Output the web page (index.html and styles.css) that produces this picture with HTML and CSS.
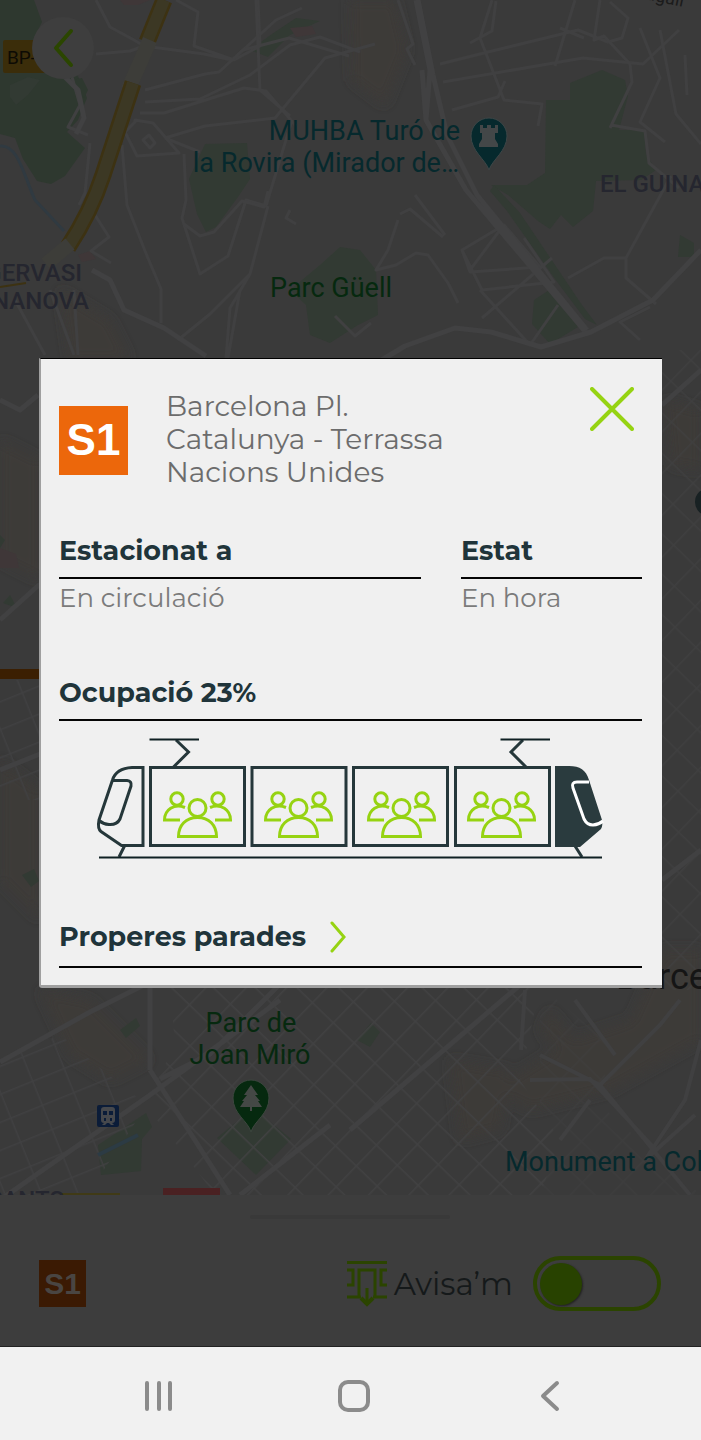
FILE: index.html
```html
<!DOCTYPE html>
<html lang="ca">
<head>
<meta charset="utf-8">
<meta name="viewport" content="width=device-width, initial-scale=1">
<title>Barcelona Pl. Catalunya - Terrassa Nacions Unides</title>
<link rel="stylesheet" href="styles.css">
</head>
<body>
<div class="screen">
  <div class="app">
    <div class="map">
      <svg class="map-canvas" viewBox="0 0 701 1195" preserveAspectRatio="xMinYMin slice" role="img" aria-label="Mapa de Barcelona">
        <defs>
          <pattern id="blocks" width="29" height="29" patternUnits="userSpaceOnUse" patternTransform="translate(375 1062) rotate(44)">
            <path d="M0 0H29M0 0V29" stroke="#414142" stroke-width="3" fill="none"/>
          </pattern>
          <pattern id="blocks-small" width="26" height="34" patternUnits="userSpaceOnUse" patternTransform="rotate(68)">
            <path d="M0 0H26M0 0V34" stroke="#404041" stroke-width="3" fill="none"/>
          </pattern>
          <filter id="soft"><feGaussianBlur stdDeviation="6"/></filter>
        </defs>
        <rect width="701" height="1195" fill="#3a3a3a"/>

        <g fill="#3d3b37" filter="url(#soft)">
          <path d="M350 0h45l12 50-22 55-33-25z"/>
          <path d="M0 440l40 20v120L0 560zM0 760l40 30v130L0 880z"/>
          <path d="M665 400l36 10v60l-30-5zM662 950h39v90l-90 50-80 20-40-20 80-50 60-20z"/>
          <path d="M40 990l50 10 60 60-40 20-40-25zM450 1060l60 10-10 60-40 10zM550 1010l25 30-15 15-20-25z"/>
          <path d="M60 290l50 30 20 40H70z"/>
        </g>

        <g fill="#2e382f">
          <path d="M0 0h34l8 22-10 20 46 34 9 22-9 22-11 12 18 16-20 28-14 8-14-3-14-22L15 138 0 134z"/>
          <path d="M72 80l10-2 6 12-4 8z"/>
        </g>
        <g fill="#323a33">
          <path d="M10 85l18-8 12 3-12 15-12 10-6-8z"/>
          <path d="M205 144l42-1 3 36-12 18-22 30-10 5-9-18-8-35z"/>
          <path d="M250 50l22-16 24-16 24 3-30 14-22 22z"/>
          <path d="M290 290l30-25 20-18 20 3 16 20 2 45-20 10-28 18-20-8-4-30z"/>
          <path d="M602 70l23 10 3 16-9 34h25l2 24 10 16-15 10-45 1-3 30-20 16-12-12-11 14-12-8-30-26-17-10h36l18-12 1-73h24V83z"/>
          <path d="M494 185l26 28 62 92 15 20-12-6-30-40-48-68-17-20zM534 300l20-13 24 40-28 17-18-20z"/>
          <path d="M680 235l14 8v14h-16z"/>
          <path d="M357 1040l14-17 9 9-10 15z"/>
          <path d="M217 1138l36-30 38 31-35 36z"/>
          <path d="M98 1145l30-20 18-12 6 14-10 12-1 32-40 4z"/>
          <path d="M120 1030l16-12 4 8-14 12zM22 875l12-6 5 12-8 6zM0 535l5 5-5 8zM3 603l7-8 7 13z"/>
        </g>
        <g fill="#3f3738">
          <path d="M120 0h30l-12 5h-14zM290 28l22-2 4 8-20 3zM78 255l12-4 6 8-14 3zM0 548l16 6 3 14H0z"/>
        </g>

        <path fill="url(#blocks)" d="M170 985H540l-20 95 40 60-20 55H215l-30-40-40-50 30-60z"/>
        <path fill="url(#blocks)" d="M540 985l70 60-10 60 101 90H540z" opacity=".4"/>
        <path fill="url(#blocks)" d="M662 350h39v640h-39z" opacity=".7"/>
        <path fill="url(#blocks-small)" d="M0 1060l60-25 55 45 32 25-60 90H0z"/>
        <path fill="url(#blocks-small)" d="M0 680h40v120H0z"/>

        <g fill="none" stroke="#404041" stroke-width="3" stroke-linejoin="round">
          <path d="M96 0l14 27 24 13 10 6-14 5-34 3M144 46l60 8 28 6 44-40 26-12M176 0l22 12-4 34 40 14 26-14-2-46"/>
          <path d="M145 90l60-16 14-2 24-22 46-12 60 18M145 102l55-3 50-24 40-30 30-8 40 15M140 113h24l80-25 22 3 30 35M165 138l40-12 70-8 50-60 50-14M165 138l35 14M256 0l4 90 30 26"/>
          <path d="M135 120l18 3 26 30-42 3-12-24 10-10zM143 140l6-5 6 8-5 5z"/>
          <path d="M122 145l5 60 18 46 16 38v34M88 135l-20-8 12-22-8-28M90 143l-5 50-6 12M184 154l2 46-4 18 18 56 28-18 18-56 20 6 26-86"/>
          <path d="M184 224l16 12 14-4 28-31 22 6 4-16M268 206l-18 68-40 40-32 26M250 274l-20 34-4 50M240 290l-12 68M290 210l-4 8 10 6M335 316l20 20 16-13"/>
          <path d="M95 215l14 22-18 14 20 12M50 290l24 65M74 290l4 65M15 300l30 55"/>
          <path d="M398 0l15 44-6 5 8 16M440 64l48-12 90-22 30 12 14-4 6-20-18-16M443 82l140-24 60 6 36-34M470 43l22-12 4-30M492 0l-12 38 24 62 38 4-4 22M452 110l46-13 7-16M575 0l-20 66M560 28l24 10"/>
          <path d="M600 0l-6 40 10-4 26 28 2 18-22 46M640 28l20 50-20 44 25 20M660 30l16 84 25 30M685 55l2 40M611 125l34 6 4 32 30 25"/>
          <path d="M415 195l30 40M398 220l-10 30-12 20 20-5 20-12 12 2 20 28 10 20M400 214l10-5 33 28"/>
          <path d="M462 250l42-25 36 42-70 5zM462 250l20 40 72-8-30-44M480 290l50 55 28-40M482 318l70-60M500 230l-30 40"/>
          <path d="M568 278l36-20h22l45-82M626 258v20l30 26M640 340l-20-18 30-15"/>
        </g>
        <g fill="none" stroke="#414142" stroke-width="5" stroke-linejoin="round">
          <path d="M416 0l14 70M430 70l-4 50M418 0l15 75 14 60 30 60 110 135M422 70l4 50 40 70 80 95 42 50"/>
          <path d="M701 250l-48 50-62 32-50 15-50-15-36-4-50 18-50 30"/>
          <path d="M92 270l18 10 14 30 40 18 42 28M60 72l18 18 6 28-8 16M0 400l20 10 18-15M0 620l40-36"/>
          <path d="M0 1062l90-50 90-45M0 1200l150-105 130-95M150 985v85M150 1070l80 125M160 1079l50-25 30-30 40-40M350 1130l170-145M240 1195l90-70"/>
          <path d="M662 880l39-30M662 405l39-35M0 770l40-16"/>
        </g>
        <g fill="none" stroke="#404041" stroke-width="4">
          <path d="M525 990l-4 60M540 1055l60 30 60-60 20-25M530 1080l60-1 65 70M590 1100l-30 40M575 1000l40 55M701 1040l-16 60-40 60 50-45M600 1085l90 110"/>
        </g>

        <path d="M164 0l-17 42" fill="none" stroke="#3d3212" stroke-width="17"/>
        <path d="M164 0l-17 42" fill="none" stroke="#3c3824" stroke-width="12"/>
        <path d="M150 40L128 90" fill="none" stroke="#3d3d39" stroke-width="15"/>
        <path d="M133 83L103 175Q91 212 68 247" fill="none" stroke="#3d3212" stroke-width="17"/>
        <path d="M133 83L103 175Q91 212 68 247" fill="none" stroke="#3c3824" stroke-width="12"/>
        <path d="M70 244l-24 20" fill="none" stroke="#3d3d39" stroke-width="14"/>
        <path d="M0 287l26-4" stroke="#3d3212" stroke-width="2"/>
        <path d="M0 146c18-2 24 30 35 54l29 31" fill="none" stroke="#303a41" stroke-width="3"/>
        <path d="M98 1155l40-20" fill="none" stroke="#2c3b44" stroke-width="4"/>
        <path d="M0 674h42" stroke="#3b1f02" stroke-width="10"/>
        <circle cx="709" cy="502" r="14" fill="#182123"/>
        <rect x="163" y="1188" width="57" height="8" fill="#4a2122"/>
        <path d="M60 1194h60" stroke="#403a16" stroke-width="2"/>

        <rect x="3" y="40" width="52" height="33" rx="2" fill="#3b2d0a"/>
        <text class="road-name" x="7" y="64">BP-</text>
        <text class="street-name" x="645" y="-1" transform="rotate(12 645 -1)">ugall</text>

        <g class="place teal">
          <text x="460" y="140" text-anchor="end">MUHBA Turó de</text>
          <text x="459" y="172" text-anchor="end">la Rovira (Mirador de…</text>
          <text x="505" y="1171">Monument a Col</text>
        </g>
        <g class="place green">
          <text x="270" y="297">Parc Güell</text>
          <text x="251" y="1032" text-anchor="middle">Parc de</text>
          <text x="250" y="1064" text-anchor="middle">Joan Miró</text>
        </g>
        <g class="district">
          <text x="82" y="281" text-anchor="end">GERVASI</text>
          <text x="89" y="309" text-anchor="end">NANOVA</text>
          <text x="600" y="192">EL GUINA</text>
          <text x="64" y="1208" text-anchor="end">SANTS</text>
        </g>
        <text class="city" x="616" y="989">Barce</text>

        <path d="M489 170c-3-10-18-19-18-34a18 18 0 0 1 36 0c0 15-15 24-18 34z" fill="#06292d" stroke="#3d4647"/>
        <path d="M480 125h3v3h4v-3h4v3h4v-3h3v8h-3v6l3 5v3h-19v-3l3-5v-6h-2z" fill="#434748"/>
        <path d="M251 1132c-3-11-18-18-18-34a18 18 0 0 1 36 0c0 16-15 23-18 34z" fill="#06290f" stroke="#3d463f"/>
        <path d="M251 1085l7 10h-3l5 6h-2l4 6h-10v4h-2v-4h-10l4-6h-2l5-6h-3z" fill="#444845"/>
        <rect x="97" y="1105" width="22" height="22" rx="2" fill="#0b1c38"/>
        <path fill-rule="evenodd" fill="#46484c" d="M104 1107h8q3 0 3 3v10q0 3-3 3l2 2h-3l-2-2h-2l-2 2h-3l2-2q-3 0-3-3v-10q0-3 3-3zm-1 4v4h4v-4zm6 0v4h4v-4zm-5 7v3h2v-3zm6 0v3h2v-3z"/>
      </svg>
      <button class="back" type="button" aria-label="Enrere">
        <svg width="62" height="62" viewBox="0 0 62 62"><path d="M39 14L24 31l15 17" fill="none" stroke="#2b4600" stroke-width="4" stroke-linecap="round" stroke-linejoin="round"/></svg>
      </button>
    </div>

    <section class="sheet">
      <div class="handle"></div>
      <div class="sheet-row">
        <span class="badge badge-dim">S1</span>
        <label class="notify" for="notify">
          <svg width="40" height="46" viewBox="0 0 40 46" fill="none" stroke="#2b4400" stroke-width="3" aria-hidden="true">
            <path d="M0 1.500H40M0 9H6V24H0M40 9H34V24H40M12 36V9H28V36M0 36H14M26 36H40M20 27V43"/>
            <path d="M14 37L20 43L26 37" stroke-width="4"/>
          </svg>
          <span>Avisa’m</span>
        </label>
        <input class="toggle" id="notify" type="checkbox" role="switch">
      </div>
    </section>

    <div class="overlay">
      <section class="dialog" role="dialog" aria-modal="true" aria-labelledby="route">
        <header class="dialog-head">
          <span class="badge">S1</span>
          <h1 id="route">Barcelona Pl. Catalunya - Terrassa Nacions Unides</h1>
          <button class="close" type="button" aria-label="Tanca">
            <svg width="44" height="44" viewBox="0 0 44 44"><path d="M2 2L42 42M42 2L2 42" stroke="#96d312" stroke-width="4" stroke-linecap="round"/></svg>
          </button>
        </header>

        <div class="facts">
          <div>
            <h2>Estacionat a</h2>
            <p>En circulació</p>
          </div>
          <div>
            <h2>Estat</h2>
            <p>En hora</p>
          </div>
        </div>

        <h2>Ocupació 23%</h2>
        <svg class="train" viewBox="59 735 583 126" role="img" aria-label="Ocupació per cotxe">
          <defs>
            <g id="people" fill="none" stroke="#96d312" stroke-width="3">
              <circle cx="14" cy="9" r="6.200"/>
              <circle cx="55" cy="9" r="6.200"/>
              <circle cx="34.500" cy="18" r="8.500"/>
              <path d="M22 17.500C11 13 1.500 20 1.500 30H17"/>
              <path d="M47 17.500C58 13 67.500 20 67.500 30H52"/>
              <path d="M15.500 46.500C15.500 35 23 27.500 34.500 27.500S53.500 35 53.500 46.500Z"/>
            </g>
          </defs>
          <g fill="none" stroke="#25373a" stroke-width="3">
            <path d="M143 767.500H132C121 768 115 772 112.500 780L99 820C98 825 98 829 101 831.500L121.500 845.500H143Z"/>
            <path d="M112.500 780.500H127Q132 781 131 786L120 819Q117 825 109 824.500Q103 824 99 820.500"/>
            <path d="M124.500 846L119 857M176 740L188.500 752L173.500 767M523 740L511 752L526 767M575 846L582 857"/>
            <path d="M150.500 767.500h94v78h-94zM252 767.500h94v78h-94zM353.500 767.500h94v78h-94zM455.500 767.500h94v78h-94z"/>
          </g>
          <path d="M149.500 739.500H199M500.500 739.500H550M99 857.500H602" stroke="#0f2023" stroke-width="2"/>
          <path d="M555 766H569C580 766 586 770 589 780L602 820Q603 826 601 829L580 847H555Z" fill="#2a3b3e"/>
          <path d="M589 782H577Q571 782 573 788L584 819Q587 825 593 825Q599 824.500 603 821" fill="none" stroke="#fff" stroke-width="3"/>
          <use href="#people" x="163" y="790"/>
          <use href="#people" x="264" y="790"/>
          <use href="#people" x="367" y="790"/>
          <use href="#people" x="467" y="790"/>
        </svg>

        <h2 class="stops-title"><button class="stops" type="button">
          <span>Properes parades</span>
          <svg width="16" height="32" viewBox="0 0 16 32"><path d="M2 2L14 16L2 30" fill="none" stroke="#96d312" stroke-width="3" stroke-linecap="round"/></svg>
        </button></h2>
      </section>
    </div>
  </div>

  <nav class="system-bar" aria-label="Sistema">
    <button type="button" aria-label="Recents">
      <svg width="32" height="32" viewBox="0 0 32 32"><path d="M4 3V29M16 3V29M27 3V29" stroke="#8b8b8b" stroke-width="4" stroke-linecap="round"/></svg>
    </button>
    <button type="button" aria-label="Inici">
      <svg width="32" height="32" viewBox="0 0 32 32"><rect x="2" y="2" width="28" height="28" rx="8" fill="none" stroke="#8b8b8b" stroke-width="4"/></svg>
    </button>
    <button type="button" aria-label="Torna">
      <svg width="32" height="32" viewBox="0 0 32 32"><path d="M23 3L9 16L23 29" fill="none" stroke="#8b8b8b" stroke-width="4" stroke-linecap="round" stroke-linejoin="round"/></svg>
    </button>
  </nav>
</div>
</body>
</html>
```

FILE: styles.css
```css
* {
  box-sizing: border-box;
}

body {
  margin: 0;
  font-family: Montserrat, Inter, sans-serif;
  background: #f1f1f1;
}

button {
  padding: 0;
  border: 0;
  background: none;
  color: inherit;
  font: inherit;
  cursor: pointer;
}

svg {
  display: block;
}

h1,
h2,
p {
  margin: 0;
}

.screen {
  display: grid;
  grid-template-rows: 1fr auto;
  min-height: 100vh;
}

.app {
  position: relative;
  display: grid;
  grid-template-rows: 1fr auto;
}

/* Map */
.map {
  position: relative;
  overflow: hidden;
  background: #3a3a3a;
}

.map-canvas {
  position: absolute;
  inset: 0;
  width: 100%;
  height: 100%;
  font-family: Roboto, sans-serif;
}

.place {
  font-size: 27px;
}

.teal {
  fill: #06292d;
}

.green {
  fill: #06290f;
}

.district {
  font-size: 24px;
  font-weight: 500;
  fill: #25262f;
}

.city {
  font-size: 36px;
  fill: #151515;
}

.road-name {
  font-size: 19px;
  fill: #0d0b04;
}

.street-name {
  font-size: 18px;
  fill: #1c1c1c;
}

.back {
  position: absolute;
  top: 17px;
  left: 32px;
  border-radius: 50%;
  background: #3e3e3e;
}

/* Bottom sheet */
.sheet {
  display: grid;
  gap: 37px;
  padding: 20px 40px 35px 39px;
  background: #3d3d3d;
}

.handle {
  justify-self: center;
  width: 32%;
  height: 4px;
  border-radius: 2px;
  background: #393939;
}

.sheet-row {
  display: flex;
  align-items: center;
}

.notify {
  display: flex;
  align-items: center;
  gap: 7px;
  margin: 0 20px 0 auto;
  color: #15191a;
  font-size: 31px;
  line-height: 40px;
}

.toggle {
  appearance: none;
  display: flex;
  align-items: center;
  width: 128px;
  height: 55px;
  margin: 0;
  padding: 0 3px;
  border: 4px solid #2b4400;
  border-radius: 28px;
}

.toggle::before {
  content: "";
  width: 42px;
  height: 42px;
  border-radius: 50%;
  background: #284200;
  box-shadow: 1px 1px 2px #222;
}

.toggle:checked::before {
  margin-left: auto;
}

.badge {
  display: grid;
  place-items: center;
  width: 69px;
  height: 69px;
  background: #ec670b;
  color: #fff;
  font: bold 44px/1 "Liberation Sans", sans-serif;
}

.badge-dim {
  width: 47px;
  height: 47px;
  background: #3b1a03;
  color: #494542;
  font-size: 30px;
}

/* Dialog */
.overlay {
  position: absolute;
  inset: 0;
  display: grid;
  align-items: center;
  padding: 0 39px;
}

.dialog {
  padding: 28px 20px 17px 18px;
  border: solid #a0a0a0;
  border-width: 1px 0 3px 2px;
  border-top-color: #000;
  border-bottom-left-radius: 3px;
  background: #f0f0f0;
}

.dialog-head {
  display: grid;
  grid-template-columns: auto 1fr auto;
  column-gap: 38px;
  align-items: center;
  margin-bottom: 46px;
}

.dialog-head .badge {
  margin-top: 4px;
}

.dialog-head h1 {
  max-width: 300px;
  padding-top: 3px;
  color: #6c6c6c;
  font-size: 28px;
  font-weight: 400;
  line-height: 33px;
}

.close {
  align-self: start;
  margin-right: 8px;
}

.dialog h2 {
  padding-bottom: 10px;
  border-bottom: 2px solid #050505;
  color: #20343a;
  font-size: 27px;
  font-weight: 700;
  line-height: 32px;
}

.dialog .stops-title {
  padding-bottom: 13px;
}

.facts {
  display: grid;
  grid-template-columns: 2fr 1fr;
  gap: 40px;
  margin-bottom: 63px;
}

.facts p {
  padding-top: 3px;
  color: #7b7b7b;
  font-size: 26px;
  line-height: 32px;
}

.train {
  width: 100%;
  margin: 14px 0 60px;
}

.stops {
  display: flex;
  align-items: center;
  gap: 24px;
}

/* System navigation */
.system-bar {
  display: grid;
  grid-template-columns: repeat(3, 1fr);
  padding: 0 53px 0 61px;
  border-top: 1px solid #222;
  background: #f1f1f1;
}

.system-bar button {
  display: grid;
  place-items: center;
  height: 93px;
  padding-top: 4px;
}
```
